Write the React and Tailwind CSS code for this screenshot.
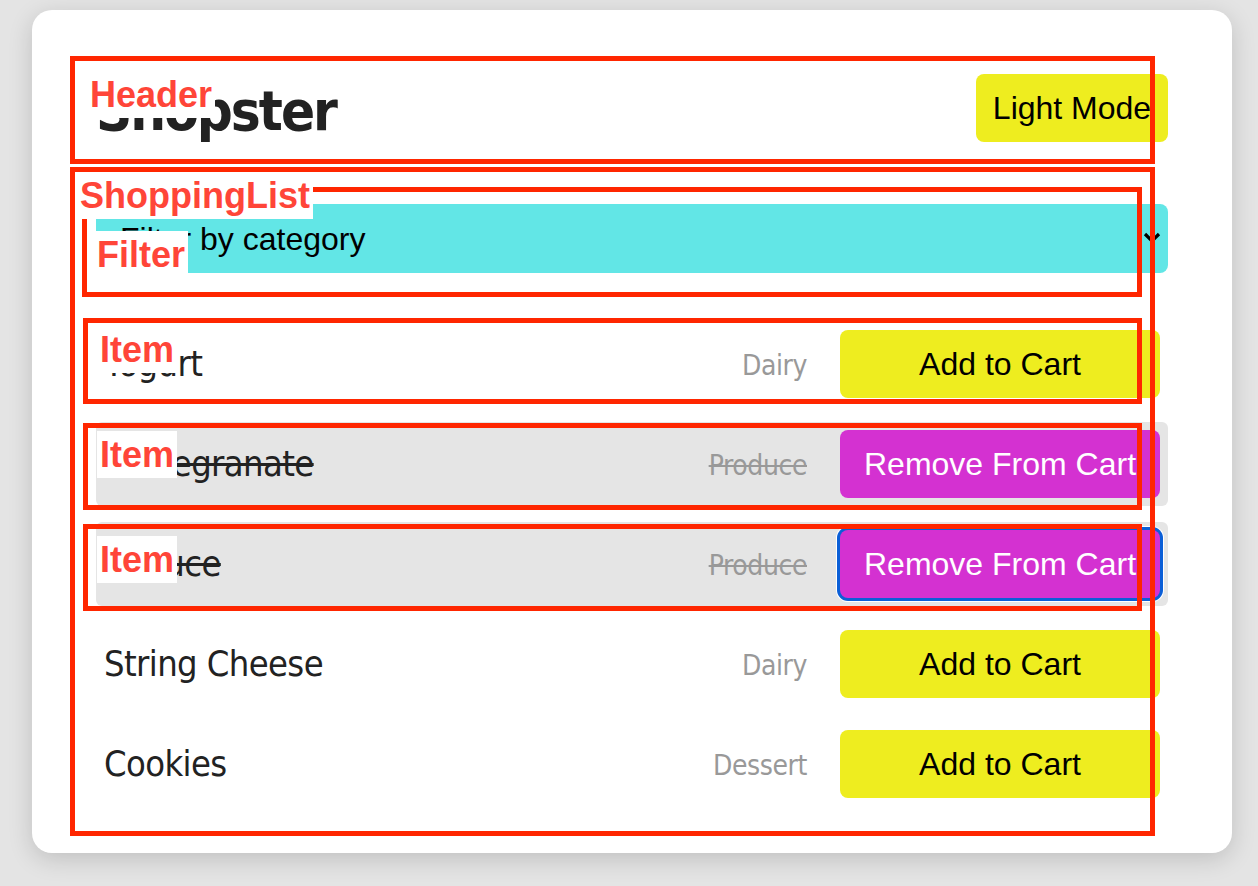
import React from "react";

const items = [
  {
    name: "Yogurt",
    category: "Dairy",
    inCart: false,
    box: "left-[-13px] right-[26px] top-[-4px] bottom-[2px]",
    label: "left-[1px] top-[4px]",
  },
  {
    name: "Pomegranate",
    category: "Produce",
    inCart: true,
    box: "left-[-13px] right-[26px] top-[1px] bottom-[-4px]",
    label: "left-[1px] top-[9px]",
  },
  {
    name: "Lettuce",
    category: "Produce",
    inCart: true,
    focused: true,
    box: "left-[-13px] right-[26px] top-[2px] bottom-[-5px]",
    label: "left-[1px] top-[14px]",
  },
  { name: "String Cheese", category: "Dairy", inCart: false },
  { name: "Cookies", category: "Dessert", inCart: false },
];

const tahoma = { fontFamily: '"DejaVu Sans Condensed", "DejaVu Sans", sans-serif' };
const arial = { fontFamily: '"Liberation Sans", Arial, sans-serif' };

function Box({ className }) {
  return (
    <div
      className={`pointer-events-none absolute z-10 border-[5px] border-[#ff2600] ${className}`}
    />
  );
}

function Label({ children, className }) {
  return (
    <div
      className={`absolute z-20 bg-white px-[3px] py-[3px] text-[36px] font-bold leading-[1.15] text-[#ff4538] ${className}`}
      style={arial}
    >
      {children}
    </div>
  );
}

function Item({ item }) {
  return (
    <div
      className={`relative flex h-[84px] items-center rounded-md px-2 ${
        item.inCart ? "bg-[#e5e5e5]" : ""
      }`}
    >
      <div
        className={`flex-1 text-[36px] tracking-[-0.6px] text-[#222] ${
          item.inCart ? "line-through" : ""
        }`}
        style={tahoma}
      >
        {item.name}
      </div>
      <div
        className={`mr-[33px] mt-[4px] text-[28px] tracking-[-0.4px] text-[#999] ${
          item.inCart ? "line-through" : ""
        }`}
        style={tahoma}
      >
        {item.category}
      </div>
      {item.inCart ? (
        <button
          className={`flex h-[68px] w-[320px] items-center justify-center rounded-lg bg-[#d431d1] text-[32px] text-white ${
            item.focused ? "shadow-[0_0_0_3px_#0b5fd7,0_0_0_4px_#ffffff]" : ""
          }`}
          style={arial}
        >
          Remove From Cart
        </button>
      ) : (
        <button
          className="flex h-[68px] w-[320px] items-center justify-center rounded-lg bg-[#eeed1f] text-[32px] text-black"
          style={arial}
        >
          Add to Cart
        </button>
      )}
      {item.box && <Box className={item.box} />}
      {item.label && <Label className={item.label}>Item</Label>}
    </div>
  );
}

export default function App() {
  return (
    <div className="min-h-[886px] w-[1258px] overflow-hidden bg-[#e4e4e4] pl-[32px] pt-[10px]">
      <div className="w-[1200px] rounded-[20px] bg-white px-[64px] pb-[47px] pt-[64px] shadow-[0_6px_24px_rgba(0,0,0,0.16)]">
        {/* Header */}
        <div className="relative flex h-[68px] items-center justify-between">
          <div
            className="pt-[6px] text-[56px] font-bold leading-none tracking-[-2px] text-[#222]"
            style={tahoma}
          >
            Shopster
          </div>
          <button
            className="flex h-[68px] w-[192px] items-center justify-center rounded-lg bg-[#eeed1f] text-[32px] text-black"
            style={arial}
          >
            Light Mode
          </button>
          <Box className="left-[-26px] right-[13px] top-[-18px] bottom-[-22px]" />
          <Label className="left-[-9px] top-[-3px]">Header</Label>
        </div>

        {/* Shopping list */}
        <div className="relative mt-[62px]">
          {/* Filter */}
          <div className="relative">
            <div
              className="flex h-[69px] items-center justify-between rounded-lg bg-[#62e6e6] pl-[24px] pr-[7px] text-[32px] text-black"
              style={arial}
            >
              <span>Filter by category</span>
              <svg width="18" height="11" viewBox="0 0 18 11" className="mb-[2px]">
                <path d="M2 2 L9 9 L16 2" fill="none" stroke="#000" strokeWidth="3.2" />
              </svg>
            </div>
            <Box className="left-[-14px] right-[26px] top-[-17px] bottom-[-24px]" />
            <Label className="left-[-2px] top-[27px]">Filter</Label>
          </div>

          {/* List */}
          <div className="mt-[49px] flex flex-col gap-[16px]">
            {items.map((it) => (
              <Item key={it.name} item={it} />
            ))}
          </div>

          <Box className="left-[-26px] right-[13px] top-[-37px] bottom-[-30px]" />
          <Label className="left-[-19px] top-[-32px] z-30">ShoppingList</Label>
        </div>
      </div>
    </div>
  );
}
